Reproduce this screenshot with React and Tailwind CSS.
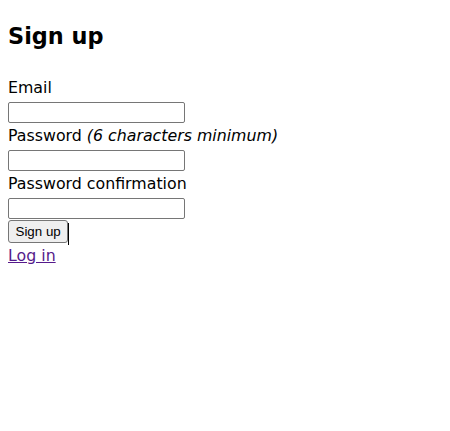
function Field({ label, type = 'text' }) {
  return (
    <div className="flex flex-col">
      <div className="h-[24px] leading-[24px] overflow-hidden">{label}</div>
      <div className="h-[24px] pt-[2px]">
        <input
          type={type}
          className="block w-[177px] h-[21px] border border-[#767676] rounded-[2px] bg-white px-[2px] text-[13px] outline-none"
        />
      </div>
    </div>
  );
}

export default function App() {
  return (
    <div className="min-h-[431px] bg-white px-2 text-black text-[15.8px] font-['DejaVu_Sans',sans-serif]">
      <h2 className="pt-[20px] pb-[24px] text-[22.4px] leading-[32px] font-bold">Sign up</h2>

      <form onSubmit={(e) => e.preventDefault()} className="flex flex-col">
        <Field label="Email" type="email" />
        <Field
          label={
            <>
              Password <em>(6 characters minimum)</em>
            </>
          }
          type="password"
        />
        <Field label="Password confirmation" type="password" />

        <div className="h-[24px] flex items-start">
          <button
            type="submit"
            className="h-[23px] px-[6.5px] border border-[#767676] rounded-[3px] bg-[#efefef] text-[13.33px] leading-none font-['Liberation_Sans',Arial,sans-serif] text-black"
          >
            Sign up
          </button>
          <span className="mt-[3px] w-px h-[22px] bg-black" />
        </div>
      </form>

      <div className="h-[24px] leading-[24px]">
        <a href="#" className="text-[#551a8b] underline">
          Log in
        </a>
      </div>
    </div>
  );
}
